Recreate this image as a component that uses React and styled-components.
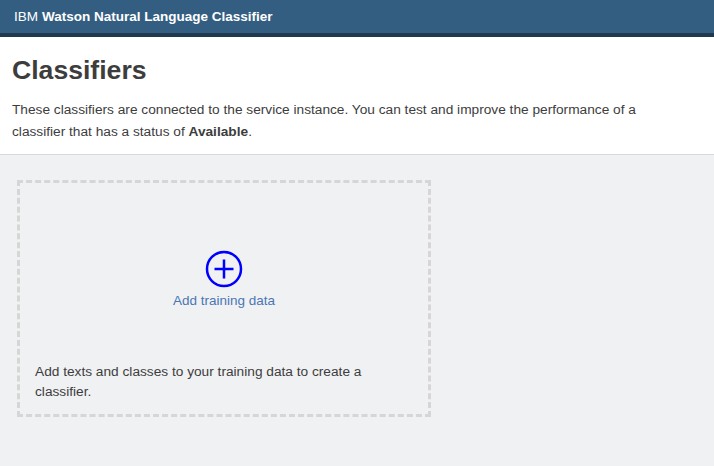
import React from 'react'
import styled, { createGlobalStyle } from 'styled-components'

const GlobalStyle = createGlobalStyle`
  html, body {
    margin: 0;
    padding: 0;
    height: 100%;
    background: #f0f1f3;
    font-family: "Liberation Sans", Arial, sans-serif;
  }
  #root {
    min-height: 100%;
  }
`

const TopBar = styled.header`
  height: 33px;
  background-color: #335e82;
  border-bottom: 4px solid #1f3a50;
  display: flex;
  align-items: center;
  padding: 0 14px;
  color: #ffffff;
  font-size: 13.5px;

  strong {
    font-weight: 700;
    margin-left: 4px;
  }
`

const Intro = styled.section`
  background-color: #ffffff;
  padding: 17px 12px 11px;
  border-bottom: 1px solid #d9d9d9;

  h1 {
    margin: 0 0 13px;
    font-size: 26.6px;
    line-height: 32px;
    font-weight: 700;
    color: #3d3d3d;
  }

  p {
    margin: 0;
    font-size: 13.7px;
    line-height: 22px;
    color: #3d3d3d;
    max-width: 650px;
  }
`

const Board = styled.main`
  padding: 25px 17px;
  display: flex;
`

const AddCard = styled.div`
  box-sizing: border-box;
  width: 414px;
  height: 237px;
  border: 3px dashed #d6d6d6;
  display: flex;
  flex-direction: column;
  padding: 0 15px 12px;
`

const AddButton = styled.button`
  flex: 1;
  background: none;
  border: none;
  display: flex;
  flex-direction: column;
  align-items: center;
  justify-content: center;
  gap: 5px;
  padding: 13px 0 0;
  font-family: inherit;
  font-size: 13.5px;
  color: #4a77b4;
  cursor: pointer;
`

const Hint = styled.p`
  margin: 0;
  font-size: 13.7px;
  line-height: 20px;
  color: #3d3d3d;
  max-width: 340px;
`

const PlusIcon = () => (
  <svg width="38" height="38" viewBox="0 0 38 38" fill="none" stroke="#0000ff" strokeWidth="2.5">
    <circle cx="19" cy="19" r="17" />
    <path d="M19 9.5v19M9.5 19h19" />
  </svg>
)

const App = () => {
  return (
    <>
      <GlobalStyle />
      <TopBar>
        IBM<strong>Watson Natural Language Classifier</strong>
      </TopBar>
      <Intro>
        <h1>Classifiers</h1>
        <p>
          These classifiers are connected to the service instance. You can test and improve the performance of a
          classifier that has a status of <b>Available</b>.
        </p>
      </Intro>
      <Board>
        <AddCard>
          <AddButton>
            <PlusIcon />
            Add training data
          </AddButton>
          <Hint>Add texts and classes to your training data to create a classifier.</Hint>
        </AddCard>
      </Board>
    </>
  )
}

export default App
